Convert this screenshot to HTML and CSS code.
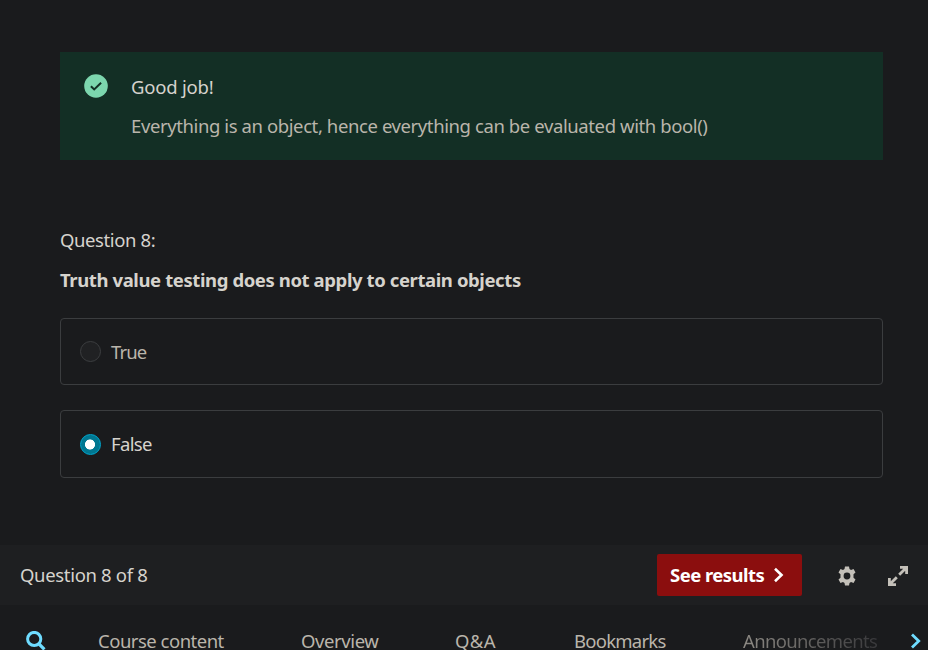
FILE: index.html
```html
<!DOCTYPE html>
<html lang="en">
<head>
<meta charset="utf-8">
<title>Quiz</title>
<link rel="stylesheet" href="styles.css">
</head>
<body>
<main class="quiz">
  <section class="feedback">
    <svg class="feedback-icon" width="24" height="24" viewBox="0 0 24 24"><circle cx="12" cy="12" r="11.8" fill="#7cd6ae"/><path d="M6.9 12.200l3.300 3.200 6.900-6.600" fill="none" stroke="#132f25" stroke-width="2"/></svg>
    <div>
      <p class="feedback-title">Good job!</p>
      <p class="feedback-text">Everything is an object, hence everything can be evaluated with bool()</p>
    </div>
  </section>
  <p class="question-label">Question 8:</p>
  <p class="question-title">Truth value testing does not apply to certain objects</p>
  <div class="answers">
    <label class="answer"><span class="radio"></span><span class="answer-true">True</span></label>
    <label class="answer selected"><span class="radio"></span><span class="answer-false">False</span></label>
  </div>
</main>
<footer class="controls">
  <span class="progress">Question 8 of 8</span>
  <button class="results"><span>See results</span><svg width="12" height="16" viewBox="0 0 12 16"><path d="M2 1.800l6.500 6.200L2 14.200" fill="none" stroke="#fff" stroke-width="2.600"/></svg></button>
  <svg class="gear" width="20" height="20" viewBox="0 0 20 20"><path fill="#c4c0b9" fill-rule="evenodd" d="M8 .5h4l.5 2.600 1.500.9 2.500-.9 2 3.400-2 1.700v3.600l2 1.700-2 3.400-2.500-.9-1.500.9-.5 2.600H8l-.5-2.600L6 16l-2.500.9-2-3.400 2-1.700V8.200l-2-1.700 2-3.400L6 4l1.500-.9zM10 6.600a3.400 3.400 0 1 0 0 6.800 3.400 3.400 0 0 0 0-6.800z"/></svg>
  <svg class="expand" width="20" height="20" viewBox="0 0 20 20"><path d="M12 1.400h6.600V8M18 2l-6.800 6.800M8 18.600H1.400V12M2 18l6.800-6.800" fill="none" stroke="#c4c0b9" stroke-width="2.800"/></svg>
</footer>
<nav class="tabs">
  <svg class="search" width="20" height="20" viewBox="0 0 20 20"><circle cx="8.200" cy="8" r="6.600" fill="none" stroke="#6fdcff" stroke-width="3"/><path d="M13 13l5.400 5.400" stroke="#6fdcff" stroke-width="3.200"/></svg>
  <a class="tab tab-course">Course content</a>
  <a class="tab tab-overview">Overview</a>
  <a class="tab tab-qa">Q&amp;A</a>
  <a class="tab tab-bookmarks">Bookmarks</a>
  <a class="tab tab-news">Announcements</a>
  <svg class="next" width="12" height="16" viewBox="0 0 12 16"><path d="M2 1.500L8.700 8 2 14.500" fill="none" stroke="#6fdcff" stroke-width="2.800"/></svg>
</nav>
</body>
</html>
```

FILE: styles.css
```css
* { box-sizing: border-box; }
body {
  margin: 0;
  width: 928px;
  height: 650px;
  overflow: hidden;
  display: flex;
  flex-direction: column;
  background: #1a1b1d;
  color: #d6d3cd;
  font: 18.5px/28px "Noto Sans", "Open Sans", sans-serif;
  letter-spacing: -0.4px;
  white-space: nowrap;
}
p { margin: 0; }
svg { display: block; flex: none; }
.quiz { height: 545px; flex: none; padding: 52px 45px 0 60px; }
.feedback { display: flex; height: 108px; padding: 22px 24px; gap: 23px; background: #132f25; }
.feedback-title { height: 39px; line-height: 25px; letter-spacing: -0.2px; }
.feedback-text { line-height: 25px; color: #bab5ab; }
.question-label { margin-top: 66px; }
.question-title { margin-top: 12px; font-weight: 700; }
.answers { display: grid; gap: 25px; margin-top: 24px; grid-template-rows: 67px 68px; }
.answer { display: flex; align-items: center; gap: 10px; padding-left: 19px; border: 1px solid #3b3d3f; border-radius: 4px; color: #bab5ab; }
.selected { color: #d6d3cd; }
.answer-true { letter-spacing: -0.9px; }
.answer-false { letter-spacing: -0.65px; }
.radio { width: 21px; height: 21px; border: 1px solid #3c3e40; border-radius: 50%; background: #202123; }
.selected .radio { border: 1px solid #00a8d0; background: radial-gradient(circle at 9px 9.5px, #fff 4.700px, #007791 5.400px); }
.controls { display: flex; align-items: center; height: 60px; flex: none; padding: 0 20px; background: #1e1f21; }
.progress { letter-spacing: -0.33px; }
.results { display: flex; align-items: center; gap: 9px; width: 145px; height: 42px; margin-left: auto; padding: 0 0 0 13px; border: 0; border-radius: 2px; background: #8b0e0e; color: #fff; font: inherit; font-weight: 700; letter-spacing: -0.55px; }
.gear { margin: 2px 0 0 35px; }
.expand { margin: 2px 0 0 31px; }
.tabs { display: flex; flex: none; height: 45px; padding: 22px 0 0 25px; }
.tab { flex: none; margin-right: 77px; color: #bab5ab; }
.search { margin: 4px 52px 0 1px; }
.tab-course { width: 126px; letter-spacing: -0.5px; }
.tab-overview { width: 77px; }
.tab-qa { width: 42px; letter-spacing: 0.4px; }
.tab-bookmarks { width: 92px; letter-spacing: -0.75px; }
.tab-news { width: 136px; margin-right: 31px; letter-spacing: -0.65px; background: linear-gradient(90deg, #8d8a84, #37373a); background-clip: text; -webkit-background-clip: text; color: transparent; }
.next { margin-top: 6px; }
```
